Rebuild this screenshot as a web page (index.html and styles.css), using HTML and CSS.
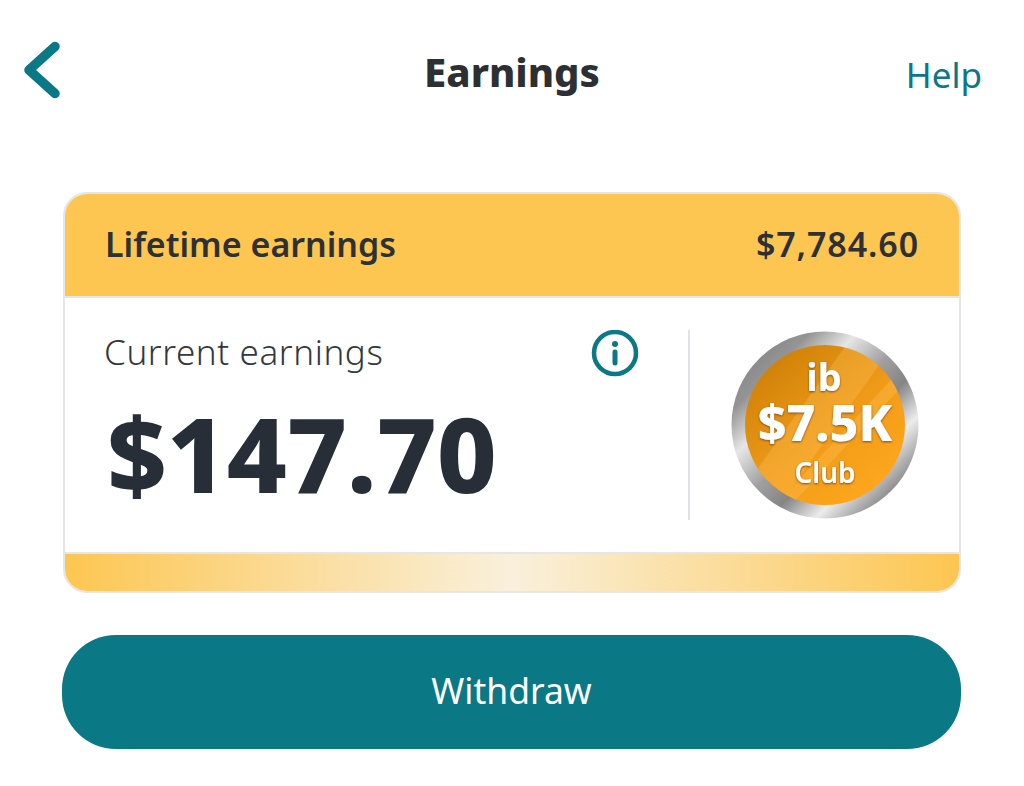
FILE: index.html
```html
<!DOCTYPE html>
<html lang="en">
<head>
<meta charset="utf-8">
<title>Earnings</title>
<link rel="stylesheet" href="styles.css">
</head>
<body>
<main class="screen">
  <header class="topbar">
    <svg class="back" width="38" height="60" viewBox="0 0 38 60" aria-label="Back">
      <path d="M32 6.500 L6 30 L32 53.500" fill="none" stroke="#0a7885" stroke-width="9.500" stroke-linecap="round" stroke-linejoin="round"/>
    </svg>
    <h1 class="title">Earnings</h1>
    <a class="help">Help</a>
  </header>
  <section class="card">
    <div class="lifetime">
      <span class="lifetime-label">Lifetime earnings</span>
      <span class="lifetime-value">$7,784.60</span>
    </div>
    <div class="current">
      <div class="current-main">
        <div class="current-head">
          <span class="current-label">Current earnings</span>
          <svg class="info" width="48" height="48" viewBox="0 0 48 48" aria-label="Info">
            <circle cx="24" cy="23" r="21" fill="none" stroke="#0a7885" stroke-width="4.500"/>
            <circle cx="24" cy="14" r="3" fill="#0a7885"/>
            <path d="M24 22V33" stroke="#0a7885" stroke-width="5" stroke-linecap="round"/>
          </svg>
        </div>
        <div class="current-value">$147.70</div>
      </div>
      <div class="current-badge">
        <svg class="badge" width="188" height="188" viewBox="0 0 188 188" role="img" aria-label="ib $7.5K Club">
          <defs>
            <linearGradient id="ring" x1="0.1" y1="0.1" x2="0.9" y2="0.9">
              <stop offset="0" stop-color="#858585"/>
              <stop offset="0.14" stop-color="#949494"/>
              <stop offset="0.3" stop-color="#e6e6e6"/>
              <stop offset="0.48" stop-color="#a0a0a0"/>
              <stop offset="0.62" stop-color="#858585"/>
              <stop offset="0.78" stop-color="#ececec"/>
              <stop offset="1" stop-color="#6f6f6f"/>
            </linearGradient>
            <linearGradient id="coin" x1="0.15" y1="0.1" x2="0.85" y2="0.95">
              <stop offset="0" stop-color="#cf8208"/>
              <stop offset="0.5" stop-color="#ef9a18"/>
              <stop offset="1" stop-color="#ffa81e"/>
            </linearGradient>
            <clipPath id="face"><circle cx="94" cy="94" r="80"/></clipPath>
            <filter id="glow" x="-20%" y="-20%" width="140%" height="140%">
              <feDropShadow dx="0" dy="1" stdDeviation="1.200" flood-color="#7a4300" flood-opacity="0.9"/>
            </filter>
          </defs>
          <circle cx="94" cy="94" r="93.500" fill="url(#ring)"/>
          <circle cx="94" cy="94" r="80" fill="url(#coin)"/>
          <g clip-path="url(#face)" fill="#ffc35a" opacity="0.32">
            <polygon points="118,10 158,20 55,165 25,140"/>
            <polygon points="168,40 176,50 62,172 52,166"/>
          </g>
          <g class="badge-text" filter="url(#glow)">
            <text class="badge-ib" x="93" y="60">ib</text>
            <text class="badge-amount" x="94" y="110">$7.5K</text>
            <text class="badge-club" x="94" y="152">Club</text>
          </g>
        </svg>
      </div>
    </div>
    <div class="shine"></div>
  </section>
  <button class="withdraw">Withdraw</button>
</main>
</body>
</html>
```

FILE: styles.css
```css
* { box-sizing: border-box; }
html, body { margin: 0; background: #fff; }
body { font-family: "Noto Sans", Lato, sans-serif; color: #2d3136; }
.screen {
  width: 1024px;
  height: 786px;
  overflow: hidden;
  padding: 40px 43px 0 23px;
  display: flex;
  flex-direction: column;
}
.topbar {
  height: 60px;
  display: flex;
  align-items: center;
  justify-content: space-between;
  position: relative;
}
.back { display: block; }
.title {
  position: absolute;
  left: 0;
  right: -20px;
  top: 8px;
  margin: 0;
  text-align: center;
  font-size: 40px;
  line-height: 48px;
  font-weight: 800;
  color: #2d3033;
  pointer-events: none;
}
.help {
  font-size: 35px;
  line-height: 40px;
  color: #0a7885;
  margin-top: 10px;
  margin-right: -1px;
}
.card {
  width: 898px;
  margin: 92px 0 0 40px;
  height: 401px;
  border: 2px solid #e4e6ea;
  border-radius: 24px;
  overflow: hidden;
  display: flex;
  flex-direction: column;
  background: #fff;
}
.lifetime {
  height: 104px;
  flex: none;
  padding: 0 40px 2px;
  background: #fdc651;
  border-bottom: 2px solid #e4e6ea;
  display: flex;
  align-items: center;
  justify-content: space-between;
  font-size: 34px;
  font-weight: 600;
  color: #2d3136;
}
.lifetime-value { letter-spacing: 0.9px; }
.current { flex: 1; display: flex; min-height: 0; padding: 32px 0; }
.current-main {
  width: 625px;
  flex: none;
  padding: 0 49px 0 39px;
  border-right: 2px solid #dfe2e6;
}
.current-head {
  display: flex;
  align-items: center;
  justify-content: space-between;
  height: 48px;
}
.current-label {
  font-size: 35px;
  font-weight: 300;
  letter-spacing: 0.6px;
  color: #33383d;
  margin-top: -6px;
}
.current-value {
  font-size: 104px;
  line-height: 120px;
  font-weight: 800;
  color: #272e38;
  margin: 15px 0 0 3px;
}
.current-badge { flex: 1; display: flex; align-items: center; padding-left: 41px; }
.badge { display: block; }
.badge-text { fill: #fff; text-anchor: middle; }
.badge-ib { font-size: 38px; font-weight: 700; }
.badge-amount { font-size: 50px; font-weight: 800; }
.badge-club { font-size: 28px; font-weight: 600; }
.shine {
  height: 39px;
  flex: none;
  border-top: 2px solid #e4e6ea;
  background: linear-gradient(90deg, #fdc651 0%, #f9f0dc 50%, #fdc651 100%);
}
.withdraw {
  width: 899px;
  height: 114px;
  margin: 42px 0 0 39px;
  border: 0;
  border-radius: 54px;
  padding: 0 0 4px;
  background: #0a7885;
  color: #fff;
  font-family: inherit;
  font-size: 35.500px;
  font-weight: 400;
}
```
